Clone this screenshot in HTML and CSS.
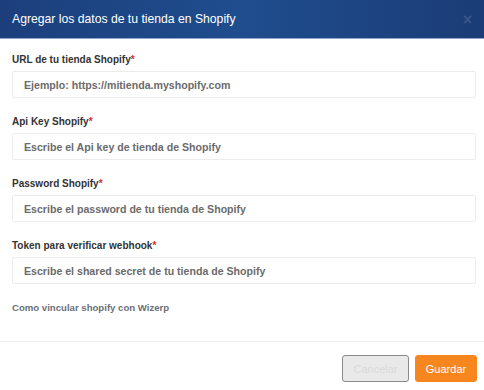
FILE: index.html
```html
<!DOCTYPE html>
<html lang="es">
<head>
    <meta charset="UTF-8">
    <meta name="viewport" content="width=device-width, initial-scale=1.0">
    <title>Shopify</title>
    <link rel="stylesheet" href="styles.css">
</head>
<body>
    <div class="modal">
        <div class="modal-header">
            <h4>Agregar los datos de tu tienda en Shopify</h4>
            <span class="close">&times;</span>
        </div>

        <div class="modal-body">
            <div class="field">
                <label>URL de tu tienda Shopify<span class="req">*</span></label>
                <input type="text" placeholder="Ejemplo: https://mitienda.myshopify.com">
            </div>
            <div class="field">
                <label>Api Key Shopify<span class="req">*</span></label>
                <input type="text" placeholder="Escribe el Api key de tienda de Shopify">
            </div>
            <div class="field">
                <label>Password Shopify<span class="req">*</span></label>
                <input type="text" placeholder="Escribe el password de tu tienda de Shopify">
            </div>
            <div class="field">
                <label>Token para verificar webhook<span class="req">*</span></label>
                <input type="text" placeholder="Escribe el shared secret de tu tienda de Shopify">
            </div>
            <a class="help" href="#">Como vincular shopify con Wizerp</a>
        </div>

        <div class="modal-footer">
            <button class="btn btn-cancel">Cancelar</button>
            <button class="btn btn-save">Guardar</button>
        </div>
    </div>
</body>
</html>
```

FILE: styles.css
```css
body {
    margin: 0;
    font-family: "Liberation Sans", Arial, sans-serif;
    background-color: #fff;
}

.modal {
    width: 484px;
    height: 390px;
    background: #fff;
}

.modal-header {
    height: 38px;
    display: flex;
    align-items: center;
    justify-content: space-between;
    padding: 0 12px;
    background: linear-gradient(90deg, #1c3f7c 0%, #1f4d8e 50%, #1b3c76 100%);
    border-bottom: 1px solid #8fa6c9;
}

.modal-header h4 {
    margin: 0;
    color: #fff;
    font-size: 12.2px;
    font-weight: normal;
}

.close {
    color: #3a5688;
    font-size: 16px;
    font-weight: bold;
    margin-top: 2px;
}

.modal-body {
    padding: 15px 8px 0 12px;
}

.field {
    margin-bottom: 18px;
}

label {
    display: block;
    font-size: 10px;
    font-weight: bold;
    color: #333;
    margin-bottom: 6px;
}

.req {
    color: #e0262b;
}

input[type="text"] {
    box-sizing: border-box;
    width: 100%;
    height: 27px;
    padding: 0 11px;
    border: 1px solid #ececec;
    border-radius: 2px;
    font-family: inherit;
    font-size: 10.6px;
    font-weight: bold;
}

input::placeholder {
    color: #6b6b6b;
}

.help {
    display: block;
    margin-top: 18px;
    font-size: 9.6px;
    font-weight: bold;
    color: #6b6f78;
    text-decoration: none;
}

.modal-footer {
    margin-top: 28px;
    border-top: 1px solid #eee;
    display: flex;
    justify-content: flex-end;
    gap: 6px;
    padding: 13px 7px 0 12px;
}

.btn {
    height: 27px;
    border-radius: 3px;
    font-family: inherit;
    font-size: 11px;
    padding: 0 8px;
    cursor: pointer;
}

.btn-cancel {
    width: 67px;
    background: #e9e9e9;
    border: 1px solid #8a8a8a;
    color: #d9d9d9;
}

.btn-save {
    width: 62px;
    background: #f7861e;
    border: 1px solid #f7861e;
    color: #fff;
}
```
